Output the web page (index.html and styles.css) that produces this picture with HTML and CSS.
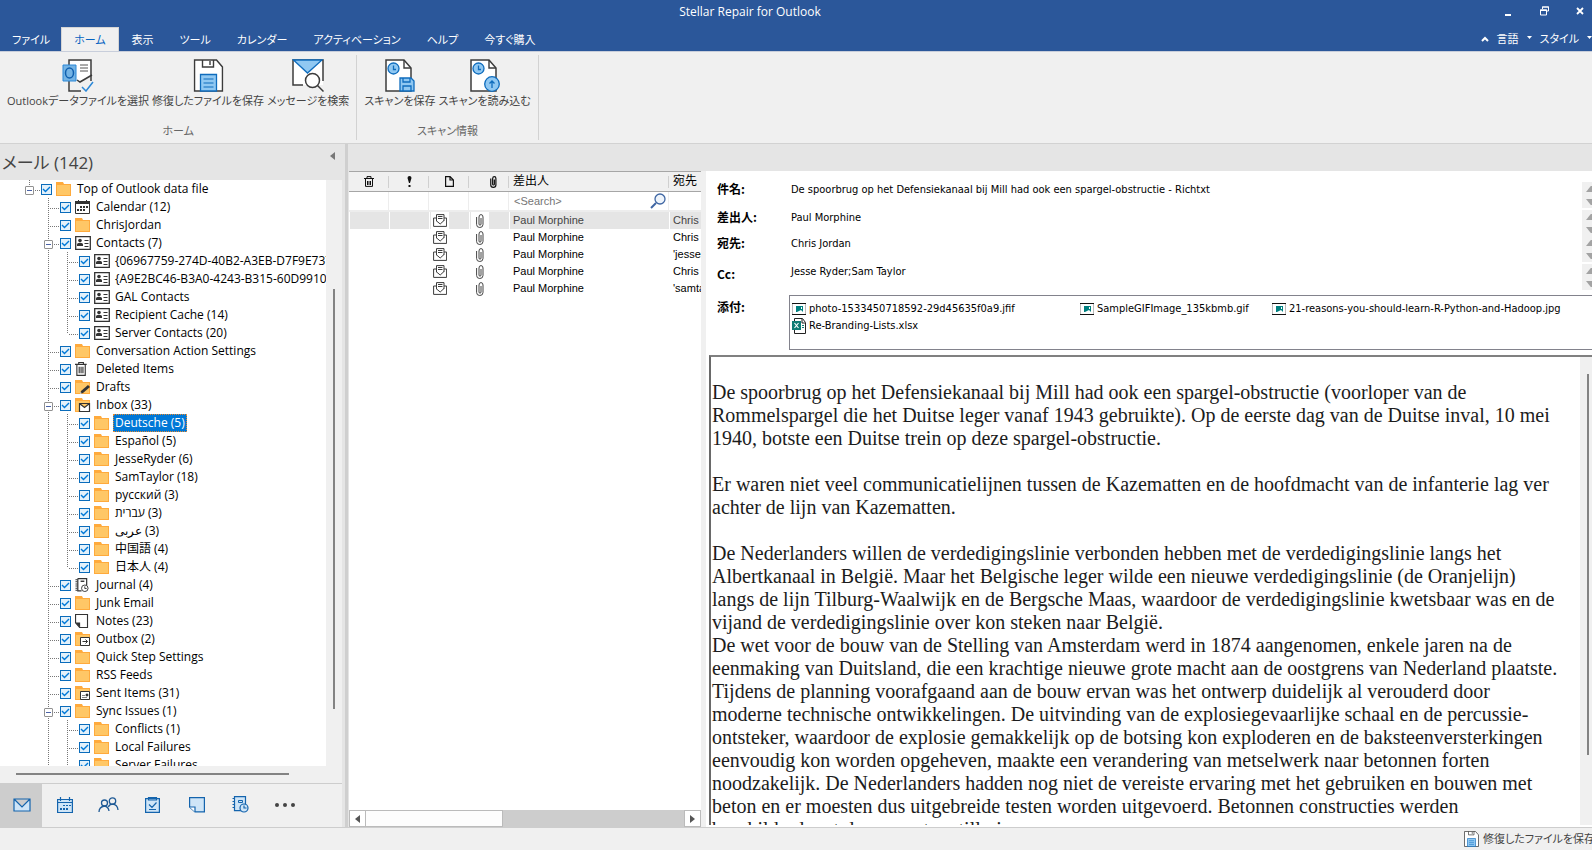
FILE: index.html
```html
<!DOCTYPE html>
<html lang="ja">
<head>
<meta charset="utf-8">
<title>Stellar Repair for Outlook</title>
<link rel="stylesheet" href="styles.css">
</head>
<body>
<svg class="defs" aria-hidden="true">
  <symbol id="folder" viewBox="0 0 15 14" preserveAspectRatio="xMinYMid"><path d="M0 0h7l1 2h7v12H0z" fill="#ffaa3c"/><path d="M1 3h13v10H1z" fill="#ffc766"/></symbol>
  <symbol id="calendar" viewBox="0 0 15 14" preserveAspectRatio="xMinYMid"><path d="M.5 1.5h14v12H.5z" fill="#fff" stroke="#333"/><path d="M0 1h15v3H0zM3 0h1v2H3zM11 0h1v2h-1z" fill="#333"/><path d="M5 6h2v2H5zM8 6h2v2H8zM11 6h2v2h-2zM2 9h2v2H2zM5 9h2v2H5zM8 9h2v2H8z" fill="#333"/></symbol>
  <symbol id="contact" viewBox="0 0 16 14" preserveAspectRatio="xMinYMid"><path d="M.7.7h14.6v12.6H.7z" fill="#fff" stroke="#333" stroke-width="1.3"/><circle cx="5" cy="4.6" r="1.8" fill="#333"/><path d="M2 10V8.500q0-1.500 1.500-1.500h3Q8 7 8 8.500V10zM9.500 4H13.500v1H9.500zM9.500 7h4v1h-4zM9.500 10h4v1h-4z" fill="#333"/></symbol>
  <symbol id="trash" viewBox="0 0 13 15" preserveAspectRatio="xMinYMid"><path d="M0 2.500h12.500M4 2V.6h5V2M2 3v11.300h9V3M4.500 5v7M6.500 5v7M8.500 5v7" fill="none" stroke="#333" stroke-width="1.200"/></symbol>
  <symbol id="drafts" viewBox="0 0 15 14" preserveAspectRatio="xMinYMid"><use href="#folder" width="15" height="14"/><path d="M5 14l1-3 7-6 2 2-7 6z" fill="#333"/><path d="M5 14l.6-2 1.200 1.300z" fill="#fff"/></symbol>
  <symbol id="inbox" viewBox="0 0 15 14" preserveAspectRatio="xMinYMid"><use href="#folder" width="15" height="14"/><path d="M4.500 5.500h10v8h-10zl5 4 5-4" fill="#fff" stroke="#333" stroke-width="1.200"/></symbol>
  <symbol id="outbox" viewBox="0 0 15 14" preserveAspectRatio="xMinYMid"><use href="#folder" width="15" height="14"/><path d="M5.500 5.500h9v8h-9z" fill="#fff" stroke="#333"/><path d="M7.500 9.500h5M10.500 7.500l2 2-2 2" fill="none" stroke="#333"/></symbol>
  <symbol id="sent" viewBox="0 0 15 14" preserveAspectRatio="xMinYMid"><use href="#folder" width="15" height="14"/><path d="M5.500 5.500h9v8h-9z" fill="#fff" stroke="#333"/><path d="M7 9.500h3M7 11.500h5M11 8h2v2h-2z" fill="#333" stroke="#333" stroke-width=".6"/></symbol>
  <symbol id="journal" viewBox="0 0 15 15" preserveAspectRatio="xMinYMid"><path d="M3 .6h9.500v7M3 .6v13.300h4" fill="none" stroke="#333" stroke-width="1.300"/><path d="M1.500 1v13" stroke="#333" stroke-dasharray="1 1" stroke-width="2"/><path d="M6 3.500h4" stroke="#333" stroke-width="1.500"/><circle cx="10.500" cy="11" r="3.500" fill="#fff" stroke="#333"/><path d="M10.500 9v2.300h2" fill="none" stroke="#333"/></symbol>
  <symbol id="note" viewBox="0 0 14 15" preserveAspectRatio="xMinYMid"><path d="M.6.6h12.800v13.800H5L.6 9.500z" fill="#fff" stroke="#333" stroke-width="1.200"/><path d="M0 9h5.500v5.500z" fill="#333"/></symbol>
  <symbol id="mailopen" viewBox="0 0 14 13"><path d="M3.500 7V.6h7.500V7M3.500 4H.6v8.400h13V4H11M3 6.500l4.200 3.500L11 6.500M5 2.500h4.500M5 4.500h4.500" fill="none" stroke="#3c3c3c"/></symbol>
  <symbol id="clip" viewBox="0 0 8 14"><path d="M.6 3v7.500q0 3 3.200 3t3.200-3V3Q7 .6 5 .6T3 3v7q0 1.200 1 1.200T5 10V4" fill="none" stroke="#444"/></symbol>
  <symbol id="picture" viewBox="0 0 14 12"><path d="M.5 0h13v12H.5z" fill="#fff" stroke="#bbb"/><path d="M0 .5h14M0 11.500h14" stroke="#111"/><path d="M4 3h7v6L9 7 7 8 5 9H4z" fill="#008080"/><path d="M9 4h1v2H9z" fill="#fff"/></symbol>
  <symbol id="floppy" viewBox="0 0 30 33"><path d="M1 1h22l6 7v24H1z" fill="#fff" stroke="#3c3c3c" stroke-width="1.500"/><path d="M9 1v7h11V1M16.500 2v4" fill="none" stroke="#3c3c3c" stroke-width="1.400"/><path d="M7 32V15.500h16V32z" fill="#90c8f2" stroke="#0f6cbd" stroke-width="1.300"/><path d="M10 20h10M10 24h10M10 28h10" stroke="#0f6cbd"/></symbol>
  <symbol id="scanpage" viewBox="0 0 29 33"><path d="M1 1h18l7 8v23H1z" fill="#fff" stroke="#3c3c3c" stroke-width="1.500"/><path d="M19 1v8h7" fill="none" stroke="#3c3c3c" stroke-width="1.400"/><circle cx="8.500" cy="9.500" r="5.500" fill="#90c8f2" stroke="#0f6cbd" stroke-width="1.300"/><path d="M8.500 6.500v4h2.500" fill="none" stroke="#0f6cbd" stroke-width="1.300"/></symbol>
</svg>

<div class="app">
<header class="top">
  <div class="titlebar">
    <h1 class="title">Stellar Repair for Outlook</h1>
    <div class="winbtns">
      <button aria-label="最小化"><svg width="8" height="12"><path d="M1 9h6v2H1z" fill="#fff"/></svg></button>
      <button aria-label="元に戻す"><svg width="9" height="10"><path d="M2.500 3V1h6v4h-2M.5 4h6v5h-6z" fill="none" stroke="#fff"/><path d="M2 .5h7v1H2zM0 3.500h7v1.500H0z" fill="#fff"/></svg></button>
      <button aria-label="閉じる"><svg width="8" height="8"><path d="M1 1l6 6M7 1L1 7" stroke="#fff" stroke-width="1.800"/></svg></button>
    </div>
  </div>
  <nav class="tabs">
    <button class="tab first">ファイル</button>
    <button class="tab active">ホーム</button>
    <button class="tab">表示</button>
    <button class="tab">ツール</button>
    <button class="tab">カレンダー</button>
    <button class="tab">アクティベーション</button>
    <button class="tab">ヘルプ</button>
    <button class="tab">今すぐ購入</button>
    <div class="tabtools">
      <button aria-label="リボンを折りたたむ"><svg width="8" height="6"><path d="M1 5l3-3 3 3" fill="none" stroke="#fff" stroke-width="2"/></svg></button>
      <button>言語</button>
      <svg class="drop" width="5" height="3"><path d="M0 0h5L2.500 3z" fill="#fff"/></svg>
      <button>スタイル</button>
      <svg class="drop" width="5" height="3"><path d="M0 0h5L2.500 3z" fill="#fff"/></svg>
    </div>
  </nav>
</header>

<section class="ribbon">
  <div class="group">
    <div class="cmds">
      <button class="cmd"><svg width="32" height="33" viewBox="0 0 32 33"><path d="M7 8V1h22v14M7 22v10h12M29 15v7" fill="none" stroke="#3c3c3c" stroke-width="1.500"/><path d="M8 2h20v14l-10 6-10-4z" fill="#fff"/><path d="M15 21l3 2 12-7" fill="none" stroke="#3c3c3c" stroke-width="1.500"/><path d="M18 6h8M18 9h8M18 12h8" stroke="#555"/><path d="M1 6h13v16H1z" fill="#74b3e4" stroke="#2b88d8"/><ellipse cx="7.500" cy="14" rx="4" ry="5" fill="none" stroke="#0f5fae" stroke-width="1.500"/><path d="M20 28l4 4 7-9" fill="none" stroke="#2b88d8" stroke-width="1.500"/></svg><span>Outlookデータファイルを選択</span></button>
      <button class="cmd"><svg width="31" height="33" viewBox="0 0 30 33"><use href="#floppy"/></svg><span>修復したファイルを保存</span></button>
      <button class="cmd"><svg width="32" height="33" viewBox="0 0 32 33"><path d="M1 1h30v25H1z" fill="#fff"/><path d="M11 26H1V1h30v21" fill="none" stroke="#3c3c3c" stroke-width="1.500"/><path d="M1.500 1h28.500L15.500 14z" fill="#90c8f2" stroke="#0f6cbd" stroke-width="1.300"/><circle cx="20.500" cy="21.500" r="7" fill="#fff" stroke="#3c3c3c" stroke-width="1.500"/><path d="M25.500 26.500l6 6" stroke="#3c3c3c" stroke-width="1.500"/></svg><span>メッセージを検索</span></button>
    </div>
    <h2 class="caption">ホーム</h2>
  </div>
  <div class="group">
    <div class="cmds">
      <button class="cmd"><svg width="30" height="33" viewBox="0 0 30 33"><use href="#scanpage" width="29" height="33"/><path d="M15 19h11l3 3v10H15z" fill="#90c8f2" stroke="#0f6cbd" stroke-width="1.300"/><path d="M18 19v4h7v-4M18 32v-5h8v5" fill="none" stroke="#0f6cbd" stroke-width="1.300"/></svg><span>スキャンを保存</span></button>
      <button class="cmd"><svg width="30" height="33" viewBox="0 0 30 33"><use href="#scanpage" width="29" height="33"/><circle cx="22" cy="25" r="7.300" fill="#90c8f2" stroke="#0f6cbd" stroke-width="1.300"/><path d="M22 29v-7M19.500 24.500L22 22l2.500 2.500" fill="none" stroke="#0f6cbd" stroke-width="1.300"/></svg><span>スキャンを読み込む</span></button>
    </div>
    <h2 class="caption">スキャン情報</h2>
  </div>
</section>

<main class="work">
  <aside class="side">
    <div class="sidehead"><h2>メール (142)</h2><button aria-label="折りたたむ"><svg width="5" height="8"><path d="M5 0v8L0 4z" fill="#777"/></svg></button></div>
    <div class="treewrap">
      <div class="treebox">
        <ul class="tree">
          <li class="root"><div class="row"><button class="exp" aria-label="閉じる"></button><label><input type="checkbox" checked><svg><use href="#folder"/></svg><span>Top of Outlook data file</span></label></div>
            <ul>
              <li><div class="row"><i class="twig"></i><label><input type="checkbox" checked><svg><use href="#calendar"/></svg><span>Calendar (12)</span></label></div></li>
              <li><div class="row"><i class="twig"></i><label><input type="checkbox" checked><svg><use href="#folder"/></svg><span>ChrisJordan</span></label></div></li>
              <li><div class="row"><button class="exp" aria-label="閉じる"></button><label><input type="checkbox" checked><svg><use href="#contact"/></svg><span>Contacts (7)</span></label></div>
                <ul>
                  <li><div class="row"><i class="twig"></i><label><input type="checkbox" checked><svg><use href="#contact"/></svg><span>{06967759-274D-40B2-A3EB-D7F9E73727}</span></label></div></li>
                  <li><div class="row"><i class="twig"></i><label><input type="checkbox" checked><svg><use href="#contact"/></svg><span>{A9E2BC46-B3A0-4243-B315-60D9910044}</span></label></div></li>
                  <li><div class="row"><i class="twig"></i><label><input type="checkbox" checked><svg><use href="#contact"/></svg><span>GAL Contacts</span></label></div></li>
                  <li><div class="row"><i class="twig"></i><label><input type="checkbox" checked><svg><use href="#contact"/></svg><span>Recipient Cache (14)</span></label></div></li>
                  <li class="end"><div class="row"><i class="twig"></i><label><input type="checkbox" checked><svg><use href="#contact"/></svg><span>Server Contacts (20)</span></label></div></li>
                </ul>
              </li>
              <li><div class="row"><i class="twig"></i><label><input type="checkbox" checked><svg><use href="#folder"/></svg><span>Conversation Action Settings</span></label></div></li>
              <li><div class="row"><i class="twig"></i><label><input type="checkbox" checked><svg><use href="#trash"/></svg><span>Deleted Items</span></label></div></li>
              <li><div class="row"><i class="twig"></i><label><input type="checkbox" checked><svg><use href="#drafts"/></svg><span>Drafts</span></label></div></li>
              <li><div class="row"><button class="exp" aria-label="閉じる"></button><label><input type="checkbox" checked><svg><use href="#inbox"/></svg><span>Inbox (33)</span></label></div>
                <ul>
                  <li><div class="row"><i class="twig"></i><label><input type="checkbox" checked><svg><use href="#folder"/></svg><span class="sel">Deutsche (5)</span></label></div></li>
                  <li><div class="row"><i class="twig"></i><label><input type="checkbox" checked><svg><use href="#folder"/></svg><span>Español (5)</span></label></div></li>
                  <li><div class="row"><i class="twig"></i><label><input type="checkbox" checked><svg><use href="#folder"/></svg><span>JesseRyder (6)</span></label></div></li>
                  <li><div class="row"><i class="twig"></i><label><input type="checkbox" checked><svg><use href="#folder"/></svg><span>SamTaylor (18)</span></label></div></li>
                  <li><div class="row"><i class="twig"></i><label><input type="checkbox" checked><svg><use href="#folder"/></svg><span>русский (3)</span></label></div></li>
                  <li><div class="row"><i class="twig"></i><label><input type="checkbox" checked><svg><use href="#folder"/></svg><span><bdi>עברית</bdi> (3)</span></label></div></li>
                  <li><div class="row"><i class="twig"></i><label><input type="checkbox" checked><svg><use href="#folder"/></svg><span><bdi>عربى</bdi> (3)</span></label></div></li>
                  <li><div class="row"><i class="twig"></i><label><input type="checkbox" checked><svg><use href="#folder"/></svg><span>中国語 (4)</span></label></div></li>
                  <li class="end"><div class="row"><i class="twig"></i><label><input type="checkbox" checked><svg><use href="#folder"/></svg><span>日本人 (4)</span></label></div></li>
                </ul>
              </li>
              <li><div class="row"><i class="twig"></i><label><input type="checkbox" checked><svg><use href="#journal"/></svg><span>Journal (4)</span></label></div></li>
              <li><div class="row"><i class="twig"></i><label><input type="checkbox" checked><svg><use href="#folder"/></svg><span>Junk Email</span></label></div></li>
              <li><div class="row"><i class="twig"></i><label><input type="checkbox" checked><svg><use href="#note"/></svg><span>Notes (23)</span></label></div></li>
              <li><div class="row"><i class="twig"></i><label><input type="checkbox" checked><svg><use href="#outbox"/></svg><span>Outbox (2)</span></label></div></li>
              <li><div class="row"><i class="twig"></i><label><input type="checkbox" checked><svg><use href="#folder"/></svg><span>Quick Step Settings</span></label></div></li>
              <li><div class="row"><i class="twig"></i><label><input type="checkbox" checked><svg><use href="#folder"/></svg><span>RSS Feeds</span></label></div></li>
              <li><div class="row"><i class="twig"></i><label><input type="checkbox" checked><svg><use href="#sent"/></svg><span>Sent Items (31)</span></label></div></li>
              <li><div class="row"><button class="exp" aria-label="閉じる"></button><label><input type="checkbox" checked><svg><use href="#folder"/></svg><span>Sync Issues (1)</span></label></div>
                <ul>
                  <li><div class="row"><i class="twig"></i><label><input type="checkbox" checked><svg><use href="#folder"/></svg><span>Conflicts (1)</span></label></div></li>
                  <li><div class="row"><i class="twig"></i><label><input type="checkbox" checked><svg><use href="#folder"/></svg><span>Local Failures</span></label></div></li>
                  <li><div class="row"><i class="twig"></i><label><input type="checkbox" checked><svg><use href="#folder"/></svg><span>Server Failures</span></label></div></li>
                </ul>
              </li>
            </ul>
          </li>
        </ul>
      </div>
      <div class="vbar"><div class="vthumb"></div></div>
    </div>
    <div class="hbar"><div class="hthumb"></div></div>
    <nav class="modules">
      <button class="on" aria-label="メール"><svg width="18" height="14"><path d="M1 1h16v12H1zl8 8 8-8" fill="#cfe5f7" stroke="#1464ad" stroke-width="1.200"/></svg></button>
      <button aria-label="カレンダー"><svg width="16" height="16"><path d="M.6 2.500h14.800v13H.6zM.6 5.500h14.800M3.500 0v4M12.500 0v4" fill="#cfe5f7" stroke="#1464ad" stroke-width="1.200"/><path d="M6 8h2v1H6zM9 8h2v1H9zM12 8h2v1h-2zM3 11h2v2H3zM6 11h2v2H6zM9 11h2v2H9z" fill="#1464ad"/></svg></button>
      <button aria-label="連絡先"><svg width="21" height="16"><g fill="none" stroke="#1f5a96" stroke-width="1.300"><circle cx="6.500" cy="6" r="3"/><path d="M1 15q0-5 5.500-6 4 .8 4.500 5"/><circle cx="14.500" cy="4" r="3.200"/><path d="M10.500 10q.5-2.600 4-2.800 5 .3 5.500 5.800"/></g></svg></button>
      <button aria-label="タスク"><svg width="15" height="16"><path d="M.6 1.600h13.800v13.800H.6z" fill="#cfe5f7" stroke="#1464ad" stroke-width="1.200"/><path d="M3.500 3V.6h8V3zM4 7.500l3 3 4.500-5M4 12.500h7" fill="none" stroke="#1464ad" stroke-width="1.200"/></svg></button>
      <button aria-label="メモ"><svg width="16" height="16"><path d="M.6.6h14.800v14.300H6L.6 10z" fill="#cfe5f7" stroke="#1464ad" stroke-width="1.200"/><path d="M.6 10H6v5" fill="#fff" stroke="#1464ad" stroke-width="1.200"/></svg></button>
      <button aria-label="履歴"><svg width="17" height="17"><path d="M2.500.6h11v14h-11z" fill="#cfe5f7" stroke="#1464ad" stroke-width="1.200"/><path d="M1.500 2v12" stroke="#1464ad" stroke-width="2" stroke-dasharray="1 2"/><path d="M6.500 4.500h4v2h-4z" fill="none" stroke="#1464ad"/><circle cx="12" cy="12" r="4" fill="#cfe5f7" stroke="#1464ad" stroke-width="1.200"/><path d="M12 9.500V12h2.500" fill="none" stroke="#1464ad" stroke-width="1.200"/></svg></button>
      <button aria-label="その他"><svg width="20" height="4"><g fill="#444"><circle cx="2" cy="2" r="2"/><circle cx="10" cy="2" r="2"/><circle cx="18" cy="2" r="2"/></g></svg></button>
    </nav>
  </aside>
  <div class="split"></div>

  <section class="content">
    <div class="list">
      <div class="listview">
        <table>
          <colgroup><col class="c"><col class="c"><col class="c"><col class="c"><col class="from"><col></colgroup>
          <thead>
            <tr class="heads">
              <th aria-label="削除"><svg width="12" height="11"><path d="M1 2.500h10M4 2V.6h4V2M2.500 3v7.400h7V3M4.500 5v4M6 5v4M7.500 5v4" fill="none" stroke="#111"/></svg></th>
              <th aria-label="重要度"><svg width="5" height="11"><path d="M.5 2Q.5 0 2.500 0t2 2L3 7H2zM1.500 9h2v2h-2z" fill="#111"/></svg></th>
              <th aria-label="種類"><svg width="9" height="11"><path d="M.6.6h4.500L8.400 4v6.400H.6zM5 1v3h3" fill="none" stroke="#111" stroke-width="1.200"/></svg></th>
              <th class="att" aria-label="添付"><svg width="7" height="12" viewBox="0 0 8 14"><path d="M.8 3v7.500q0 2.800 3 2.800t3-2.800V3Q6.800.8 5 .8T3 3v6.500q0 1 1 1t1-1V4" fill="none" stroke="#111" stroke-width="1.400"/></svg></th>
              <th class="txt">差出人</th><th class="txt">宛先</th>
            </tr>
            <tr class="filter"><td></td><td></td><td></td><td></td><td><div class="find"><input type="text" placeholder="&lt;Search&gt;" aria-label="差出人を検索"><svg width="16" height="16"><circle cx="10" cy="6" r="5" fill="#eef4fb" stroke="#3f66a3" stroke-width="1.300"/><path d="M6 10l-5 5" stroke="#3f66a3" stroke-width="2"/></svg></div></td><td></td></tr>
          </thead>
          <tbody>
            <tr class="cur"><td></td><td></td><td class="ic"><svg width="14" height="13"><use href="#mailopen"/></svg></td><td class="ic"><svg width="8" height="14"><use href="#clip"/></svg></td><td>Paul Morphine</td><td>Chris Jordan</td></tr>
            <tr><td></td><td></td><td class="ic"><svg width="14" height="13"><use href="#mailopen"/></svg></td><td class="ic"><svg width="8" height="14"><use href="#clip"/></svg></td><td>Paul Morphine</td><td>Chris Jordan</td></tr>
            <tr><td></td><td></td><td class="ic"><svg width="14" height="13"><use href="#mailopen"/></svg></td><td class="ic"><svg width="8" height="14"><use href="#clip"/></svg></td><td>Paul Morphine</td><td>'jesseryder'</td></tr>
            <tr><td></td><td></td><td class="ic"><svg width="14" height="13"><use href="#mailopen"/></svg></td><td class="ic"><svg width="8" height="14"><use href="#clip"/></svg></td><td>Paul Morphine</td><td>Chris Jordan</td></tr>
            <tr><td></td><td></td><td class="ic"><svg width="14" height="13"><use href="#mailopen"/></svg></td><td class="ic"><svg width="8" height="14"><use href="#clip"/></svg></td><td>Paul Morphine</td><td>'samtaylor'</td></tr>
          </tbody>
        </table>
      </div>
      <div class="winbar">
        <button aria-label="左へ"><svg width="5" height="8"><path d="M5 0v8L0 4z" fill="#555"/></svg></button>
        <div class="wthumb"></div>
        <button aria-label="右へ"><svg width="5" height="8"><path d="M0 0v8l5-4z" fill="#555"/></svg></button>
      </div>
    </div>

    <article class="mail">
      <dl class="fields">
        <dt>件名:</dt><dd class="f">De spoorbrug op het Defensiekanaal bij Mill had ook een spargel-obstructie - Richtxt</dd>
        <dt>差出人:</dt><dd class="f">Paul Morphine</dd>
        <dt>宛先:</dt><dd class="f">Chris Jordan</dd>
        <dt class="cc">Cc:</dt><dd class="f">Jesse Ryder;Sam Taylor</dd>
        <dt class="at">添付:</dt>
        <dd class="files">
          <a href="#"><svg width="14" height="12"><use href="#picture"/></svg>photo-1533450718592-29d45635f0a9.jfif</a>
          <a href="#"><svg width="14" height="12"><use href="#picture"/></svg>SampleGIFImage_135kbmb.gif</a>
          <a href="#"><svg width="14" height="12"><use href="#picture"/></svg>21-reasons-you-should-learn-R-Python-and-Hadoop.jpg</a>
          <a href="#"><svg width="14" height="16"><path d="M2.500.5h8l3 4v11h-11z" fill="#fff" stroke="#222"/><path d="M10 1v4h3" fill="none" stroke="#222"/><path d="M0 3h9v9H0z" fill="#107c74"/><path d="M2.500 5l4 5M6.500 5l-4 5" stroke="#fff" stroke-width="1.200"/><path d="M10 7h2v1h-2zM10 9h2v1h-2z" fill="#107c74"/></svg>Re-Branding-Lists.xlsx</a>
        </dd>
      </dl>
      <div class="bodybox">
        <div class="bodytext">
          <p>De spoorbrug op het Defensiekanaal bij Mill had ook een spargel-obstructie (voorloper van de<br>Rommelspargel die het Duitse leger vanaf 1943 gebruikte). Op de eerste dag van de Duitse inval, 10 mei<br>1940, botste een Duitse trein op deze spargel-obstructie.</p>
          <p>Er waren niet veel communicatielijnen tussen de Kazematten en de hoofdmacht van de infanterie lag ver<br>achter de lijn van Kazematten.</p>
          <p>De Nederlanders willen de verdedigingslinie verbonden hebben met de verdedigingslinie langs het<br>Albertkanaal in België. Maar het Belgische leger wilde een nieuwe verdedigingslinie (de Oranjelijn)<br>langs de lijn Tilburg-Waalwijk en de Bergsche Maas, waardoor de verdedigingslinie kwetsbaar was en de<br>vijand de verdedigingslinie over kon steken naar België.<br>De wet voor de bouw van de Stelling van Amsterdam werd in 1874 aangenomen, enkele jaren na de<br>eenmaking van Duitsland, die een krachtige nieuwe grote macht aan de oostgrens van Nederland plaatste.<br>Tijdens de planning voorafgaand aan de bouw ervan was het ontwerp duidelijk al verouderd door<br>moderne technische ontwikkelingen. De uitvinding van de explosiegevaarlijke schaal en de percussie-<br>ontsteker, waardoor de explosie gemakkelijk op de botsing kon exploderen en de baksteenversterkingen<br>eenvoudig kon worden opgeheven, maakte een verandering van metselwerk naar betonnen forten<br>noodzakelijk. De Nederlanders hadden nog niet de vereiste ervaring met het gebruiken en bouwen met<br>beton en er moesten dus uitgebreide testen worden uitgevoerd. Betonnen constructies werden<br>beschilderd met de zwaarste artillerie.</p>
        </div>
        <div class="vbar"><div class="vthumb"></div></div>
      </div>
    </article>
  </section>
</main>

<footer class="status"><button><svg width="15" height="16" viewBox="0 0 30 33" preserveAspectRatio="none"><use href="#floppy"/></svg>修復したファイルを保存</button></footer>
</div>
</body>
</html>
```

FILE: styles.css
```css
* { box-sizing: border-box; }
html, body { height: 100%; }
body {
  margin: 0;
  overflow: hidden;
  background: #f0f0f0;
  color: #000;
  font: 12px/18px "Open Sans", "Noto Sans", "Noto Sans CJK JP", sans-serif;
  font-feature-settings: "palt";
}
button { margin: 0; padding: 0; border: 0; background: none; font: inherit; font-feature-settings: inherit; color: inherit; white-space: nowrap; }
h1, h2, p, ul, dl, dd { margin: 0; padding: 0; }
h1, h2 { font: inherit; }
svg { display: block; flex: none; }
.defs { position: absolute; width: 0; height: 0; }
.app { height: 100vh; display: flex; flex-direction: column; }

/* title bar and tabs */
.top { background: #2b579a; color: #fff; }
.titlebar { display: flex; height: 27px; }
.title { flex: 1; padding-left: 10px; text-align: center; line-height: 24px; }
.winbtns { display: flex; width: 102px; height: 22px; }
.winbtns button { flex: none; width: 36px; display: grid; place-items: center; }
.tabs { display: flex; height: 24px; white-space: nowrap; font-size: 11px; }
.tab { padding: 0 12px; border: 1px solid transparent; border-bottom: 0; }
.tab.first { padding: 0 10px 0 11px; }
.tab.active { background: #f0f0f0; border-color: #d5d5d5; color: #0563c1; }
.tabtools { margin-left: auto; display: flex; align-items: center; gap: 8px; }
.tabtools .drop { margin-top: -4px; }

/* ribbon */
.ribbon { display: flex; padding: 3px 0; height: 93px; border-top: 1px solid #c8cedb; border-bottom: 1px solid #d2d2d2; color: #444; }
.group { display: flex; flex-direction: column; justify-content: space-between; padding: 4px 7px 0; border-right: 1px solid #d2d2d2; }
.cmds { display: flex; gap: 3px; }
.cmd { display: flex; flex-direction: column; align-items: center; font-size: 11px; }
.caption { text-align: center; color: #666; font-size: 11px; }

/* work area */
.work { flex: 1; min-height: 0; display: flex; border-bottom: 1px solid #cdcdcd; }
.side { width: 342px; flex: none; display: flex; flex-direction: column; background: #f0f0f0; }
.sidehead { display: flex; justify-content: space-between; height: 36px; padding: 0 7px 0 2px; background: #e5e5e5; color: #444; }
.sidehead h2 { font-size: 17px; line-height: 38px; }
.sidehead button { height: 24px; }
.treewrap { flex: 1; min-height: 0; display: flex; }
.treebox { flex: 1; min-width: 0; overflow: hidden; background: #fff; }
.vbar { width: 16px; flex: none; background: #f0f0f0; }
.treewrap .vthumb { width: 2px; height: 420px; margin: 109px 0 0 7px; background: #838383; }
.hbar { height: 17px; padding: 7px 0 0 16px; }
.hthumb { width: 273px; height: 2px; background: #838383; }

.tree, .tree ul { list-style: none; }
.tree ul { margin-left: 19px; }
.tree { padding-left: 24px; line-height: 18px; white-space: nowrap; }
.tree li { background: repeating-linear-gradient(#777 0 1px, transparent 1px 2px) 5px 0 / 1px 100% no-repeat; }
.tree li.root { background-size: 1px 5px; }
.tree li.end { background-size: 1px 10px; }
.row { display: flex; align-items: center; height: 18px; }
.twig { flex: none; width: 11px; height: 1px; margin: 2px 0 0 6px; background: repeating-linear-gradient(90deg, transparent 0 1px, #777 1px 2px); }
.exp {
  position: relative; flex: none; width: 9px; height: 9px; margin: 2px 7px 0 1px;
  border: 1px solid #919191; border-radius: 1px;
  background: linear-gradient(#4b63a7, #4b63a7) 1px 3px / 5px 1px no-repeat, #fff;
}
.exp::after { content: ""; position: absolute; left: 9px; top: 3px; width: 5px; border-top: 1px dotted #777; }
.row label { flex: none; display: flex; align-items: center; }
.row input {
  appearance: none; flex: none; width: 11px; height: 11px; margin: 0 4px 0 0; border: 1px solid #0a6cbb;
  background: #e3f1fb url("data:image/svg+xml,%3Csvg xmlns='http://www.w3.org/2000/svg' viewBox='0 0 9 9'%3E%3Cpath d='M1 4l2.500 2.500L8 2' fill='none' stroke='%230078d7' stroke-width='1.400'/%3E%3C/svg%3E");
}
.row svg { width: 16px; height: 14px; }
.row span { padding: 0 2px; margin-left: 3px; }
.row .sel { background: #0078d7; color: #fff; outline: 1px dotted #e58a30; outline-offset: -1px; }

.modules { display: flex; height: 44px; border-top: 1px solid #cdcdcd; }
.modules button { width: 44px; display: grid; place-items: center; padding: 0 0 2px 1px; }
.modules .on { width: 42px; background: #cdcdcd; }
.split { width: 7px; flex: none; border: solid #e5e5e5; border-width: 0 1px 0 3px; background: #cfcfcf; }
.content { flex: 1; min-width: 0; display: flex; gap: 5px; border-top: 27px solid #e5e5e5; }

/* message list */
.list { width: 352px; flex: none; display: flex; flex-direction: column; background: #fff; }
.listview { flex: 1; overflow: hidden; border-top: 1px solid #a6a6a6; }
.list table { width: 420px; table-layout: fixed; border-collapse: separate; border-spacing: 0; font: 11px/17px "Liberation Sans", "Noto Sans CJK JP", sans-serif; }
.c { width: 40px; }
.from { width: 160px; }
.list th, .list td { padding: 0; text-align: left; font-weight: normal; white-space: nowrap; }
.heads th { height: 20px; font-size: 12px; background: linear-gradient(#d0d0d0, #d0d0d0) 100% 50% / 1px 12px no-repeat #f0f0f0; border-bottom: 1px solid #a6a6a6; }
.heads svg { margin: 0 auto; }
.heads .att svg { margin: 0 12px 0 auto; }
.list .heads .txt { padding-left: 4px; }
.filter td { height: 20px; border-right: 1px solid #ededed; border-bottom: 2px solid #ededed; }
.find { display: flex; align-items: center; padding: 0 2px 0 5px; }
.find input { flex: 1; min-width: 0; padding: 0; border: 0; background: none; font: inherit; }
.find input::placeholder { color: #767676; }
.list tbody td { height: 17px; padding-left: 4px; }
.list tbody .ic svg { margin: 0; }
.list tbody .ic + .ic svg { margin-left: 3px; }
.cur td { background: #e5e5e5; background-clip: padding-box; border-left: 1px solid #fff; color: #444; }
.list .cur td { padding-left: 3px; }
.list .cur .ic { background: linear-gradient(#fff, #fff) 1px 0 / 18px 100% no-repeat #e5e5e5; }
.winbar { display: flex; height: 17px; background: #cdcdcd; }
.winbar button { width: 17px; border: 1px solid #bbb; background: #fff; display: grid; place-items: center; }
.wthumb { width: 137px; margin-right: auto; background: #fdfdfd; border: 1px solid #bbb; border-left: 0; }

/* message */
.mail { flex: 1; min-width: 0; display: flex; flex-direction: column; background: #fff; }
.fields { display: grid; grid-template-columns: 72px 1fr; grid-template-rows: 28px 26px 28px 31px 55px; padding: 11px 0 5px 11px; font: 11px/14px "DejaVu Sans Condensed", "Noto Sans CJK JP", sans-serif; }
.fields dt { font-weight: bold; font-size: 12px; font-family: "Noto Sans CJK JP", sans-serif; }
.fields dt.cc { padding-top: 3px; }
.fields dt.at { padding-top: 5px; }
.fields .f { padding: 1px 0 0 2px; background: linear-gradient(#f0f0f0, #f0f0f0) 100% 0 / 10px 26px no-repeat; position: relative; }
.f::before, .f::after { content: ""; position: absolute; right: 0; top: 4px; width: 6px; height: 6px; background: #a3a3a3; clip-path: polygon(0 100%, 80% 0, 100% 0, 100% 100%); }
.f::after { top: 17px; clip-path: polygon(0 0, 100% 0, 100% 100%, 80% 100%); }
.files { display: flex; flex-wrap: wrap; align-content: flex-start; gap: 1px 0; padding: 5px 0 0 2px; border: 1px solid #82828c; border-right: 0; }
.files a { display: flex; align-items: center; gap: 3px; height: 16px; color: #000; text-decoration: none; white-space: nowrap; }
.files a:nth-child(1) { width: 288px; }
.files a:nth-child(2) { width: 192px; }
.files a:nth-child(3) { width: 300px; }
.bodybox { flex: 1; min-height: 0; margin: 0 0 2px 3px; display: flex; border: solid #696969; border-width: 2px 0 0 2px; border-top-color: #808080; }
.bodytext { flex: 1; min-width: 0; overflow: hidden; padding: 24px 0 0 1px; font: 20px/23px "Liberation Serif", serif; color: #1c1c1c; white-space: nowrap; }
.bodytext p { margin-bottom: 23px; }
.bodybox .vbar { width: 12px; }
.bodybox .vthumb { width: 2px; height: 381px; margin: 17px 0 0 7px; background: #838383; }

/* status bar */
.status { height: 22px; display: flex; justify-content: flex-end; color: #444; overflow: hidden; }
.status button { display: flex; align-items: center; gap: 4px; width: 128px; font-size: 11px; }
```
